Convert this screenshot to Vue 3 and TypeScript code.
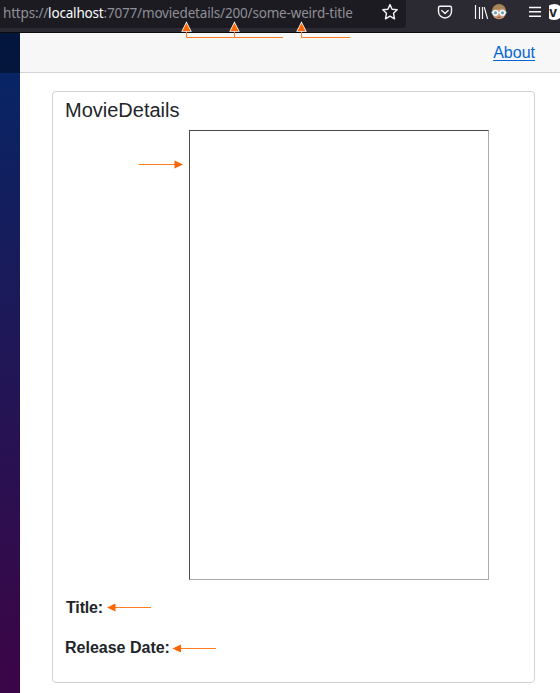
<script setup lang="ts">
interface Field {
  label: string
  modifier: string
}

const fields: Field[] = [
  { label: 'Title:', modifier: 'title' },
  { label: 'Release Date:', modifier: 'release' },
]
</script>

<template>
  <div class="window">
    <header class="toolbar">
      <div class="address">
        <span class="url">https://<b>localhost</b>:7077/moviedetails/200/some-weird-title</span>
        <svg class="star" width="18" height="18" viewBox="0 0 18 18">
          <path d="M9 1.6 11.1 6.2 16.2 6.8 12.5 10.2 13.5 15.8 9 13.1 4.5 15.8 5.5 10.2 1.8 6.8 6.9 6.2Z" fill="none" stroke="#f4f4f6" stroke-width="1.4" stroke-linejoin="round" />
        </svg>
      </div>
      <svg class="tools" width="154" height="28" viewBox="406 0 154 28">
        <g fill="none" stroke="#f4f4f6" stroke-width="1.4" stroke-linecap="round" stroke-linejoin="round">
          <path d="M440 6.2H450Q451.5 6.2 451.5 7.7V11.5A6.5 6.5 0 0 1 438.5 11.5V7.7Q438.5 6.2 440 6.2Z" />
          <path d="m441.8 10.5 3.2 3 3.2-3" />
        </g>
        <path d="M475.5 5V19M479.5 7V19M482.5 7V19M484.2 7.2 487.6 18.8" fill="none" stroke="#f4f4f6" stroke-width="1.2" />
        <circle cx="499" cy="12.2" r="7" fill="#d09a78" />
        <path d="M492 11A7 7 0 0 1 506 11L503 8.5 498 9.2 493 10.5Z" fill="#a78455" />
        <path d="M491.5 12.5H506.5" stroke="#e9eef0" stroke-width="1.5" />
        <circle cx="495.5" cy="12.8" r="2.3" fill="#5ba3b5" stroke="#edf5f7" stroke-width="1.6" />
        <circle cx="502.5" cy="12.8" r="2.3" fill="#5ba3b5" stroke="#edf5f7" stroke-width="1.6" />
        <path d="M497.3 17.3H500.7" stroke="#894e42" stroke-width="1" />
        <path d="M529 7.5H541M529 11.7H541M529 16.3H541" stroke="#fbfbfe" stroke-width="1.5" />
        <path d="M549 5.5Q551 4 554.5 4Q559 4 562 8V16Q559 20 554.5 20Q551 20 549 18.5Z" fill="#fff" />
        <text x="549.2" y="16.8" class="badge">v</text>
      </svg>
    </header>

    <div class="page">
      <aside class="sidebar"><div class="sidebar-top"></div></aside>
      <main class="main">
        <nav class="top-row"><a class="about">About</a></nav>
        <section class="card">
          <h1 class="heading">MovieDetails</h1>
          <div class="poster"></div>
          <p v-for="field in fields" :key="field.label" class="field" :class="field.modifier">{{ field.label }}</p>
        </section>
      </main>
    </div>

    <svg class="annotations" width="560" height="693" viewBox="0 0 560 693">
      <g fill="none" stroke="#ff7d20" stroke-width="1">
        <path d="M186.5 30V37.5H283M234.5 30V37.5M301.5 30V37.5H350" />
        <path d="M139 164.5H176M114 607.5H151M179 648.5H216" />
      </g>
      <g fill="#ff6500">
        <g stroke="#fff" stroke-width="1.6" paint-order="stroke">
          <path d="M186.5 23 190.5 31H182.5Z" />
          <path d="M234.5 23 238.5 31H230.5Z" />
          <path d="M301.5 23 305.5 31H297.5Z" />
        </g>
        <path d="M183 164.5 174.5 160.5V168.5Z" />
        <path d="M107 607.5 115.5 603.5V611.5Z" />
        <path d="M172.5 648.5 181 644.5V652.5Z" />
      </g>
    </svg>
  </div>
</template>

<style>
body {
  margin: 0;
  overflow: hidden;
}
</style>

<style scoped>
.window {
  position: relative;
  display: flex;
  flex-direction: column;
  width: 560px;
  height: 693px;
  overflow: hidden;
  background: #fff;
  color: #212529;
  font-family: "Liberation Sans", Arial, sans-serif;
}

.toolbar {
  display: flex;
  flex: none;
  box-sizing: border-box;
  height: 33px;
  background: #2b2a33;
  border-bottom: 1px solid #0c0c0d;
}

.address {
  display: flex;
  box-sizing: border-box;
  width: 406px;
  height: 28px;
  padding: 3px 7px 0 3px;
  justify-content: space-between;
  background: #1c1b22;
  border-bottom-right-radius: 4px;
}

.url {
  color: #8f8f96;
  font: 13.5px/21px "Noto Sans", "Open Sans", sans-serif;
  letter-spacing: -0.18px;
  white-space: nowrap;
}

.url b {
  color: #fbfbfe;
  font-weight: 400;
}

.badge {
  fill: #202027;
  font: bold 14px "Liberation Sans", sans-serif;
}

.page {
  display: flex;
  flex: 1;
}

.sidebar {
  width: 20px;
  background: linear-gradient(180deg, #052767 0%, #3a0647 96%);
}

.sidebar-top {
  height: 40px;
  background: rgba(0, 0, 0, 0.4);
}

.main {
  flex: 1;
}

.top-row {
  display: flex;
  box-sizing: border-box;
  height: 40px;
  padding: 0 25px 0 0;
  align-items: center;
  justify-content: flex-end;
  background: #f7f7f7;
  border-bottom: 1px solid #d6d5d5;
}

.about {
  color: #0366d6;
  font-size: 16px;
  line-height: 24px;
  text-decoration: underline;
  text-decoration-thickness: 1px;
  text-decoration-skip-ink: none;
  text-underline-offset: 2px;
}

.card {
  box-sizing: border-box;
  width: 483px;
  height: 592px;
  margin: 18px 0 0 32px;
  padding: 6px 12px 0;
  border: 1px solid #ced4da;
  border-radius: 4px;
}

.heading {
  margin: 0 0 8px;
  font-size: 20px;
  font-weight: 400;
  line-height: 24px;
}

.poster {
  box-sizing: border-box;
  width: 300px;
  height: 450px;
  margin: 0 0 16px 124px;
  border: 1px solid;
  border-color: #4b4b4b #ababab #ababab #4b4b4b;
}

.field {
  margin: 0 0 16px;
  font-size: 16px;
  font-weight: 700;
  line-height: 24px;
}

.title {
  padding-left: 1px;
  letter-spacing: -0.15px;
}

.annotations {
  position: absolute;
  inset: 0;
  pointer-events: none;
}
</style>
